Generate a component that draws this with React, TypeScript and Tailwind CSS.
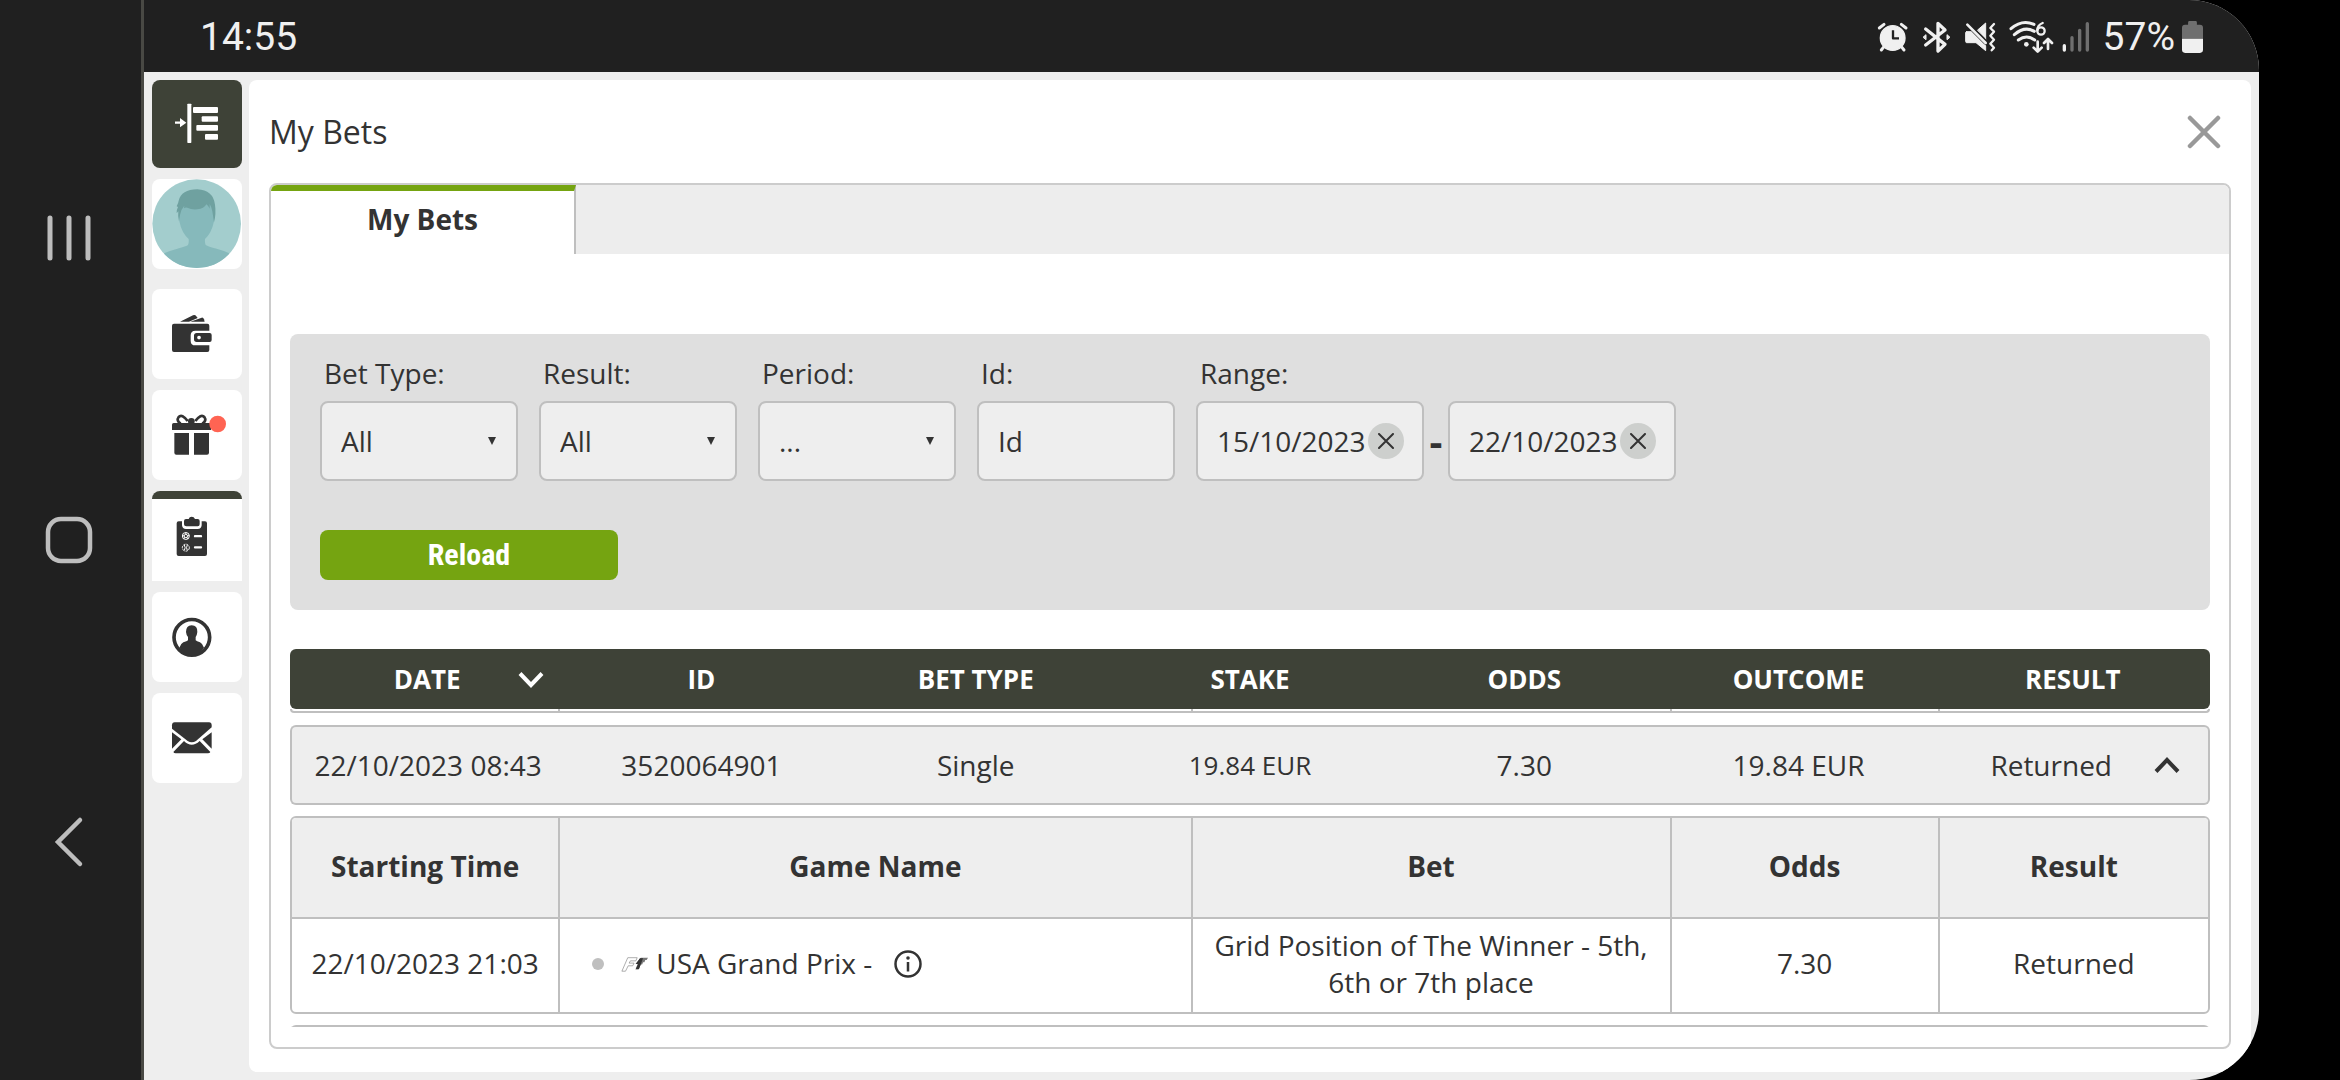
import React, { useState } from "react";

const SANS = "font-['Open_Sans','Noto_Sans',sans-serif]";

/* ---------- status bar ---------- */

function StatusIcons() {
  return (
    <svg viewBox="20 24 645 108" className="h-9 w-[215px]" aria-hidden="true">
      <g fill="#f0f0f0" stroke="#f0f0f0" strokeLinecap="round" strokeLinejoin="round">
        <circle cx="67" cy="81" r="37" strokeWidth="4" />
        <path d="M27 51L41 40M93 40L107 51M41 107L33 117M93 107L101 117" fill="none" strokeWidth="9" />
        <path d="M68 58V82H86" fill="none" stroke="#202020" strokeWidth="7" strokeLinecap="butt" />
        <path d="M166 54L224 100L203 120V37L224 57L166 102" fill="none" strokeWidth="10" />
        <path d="M159 78L167 71V85ZM238 78L230 71V85Z" strokeWidth="3" />
        <path d="M322 57L346 36V84ZM289 62H305L346 104V119L317 95H289Q286 95 286 91V66Q286 62 289 62Z" strokeWidth="3" />
        <path d="M293 41L346 94" fill="none" stroke="#202020" strokeWidth="14" />
        <path d="M291 41L346 96" fill="none" strokeWidth="8" />
        <path d="M371 39L360 51L371 62L360 74L371 86L360 98L371 110L364 118" fill="none" strokeWidth="7" />
        <path d="M422 53Q455 24 491 40M432 71Q463 44 492 61M444 87Q469 69 493 87" fill="none" strokeWidth="9" />
        <circle cx="468" cy="100" r="7" stroke="none" />
        <path d="M517 36Q501 42 501 58" fill="none" strokeWidth="7" />
        <circle cx="512" cy="60" r="11" fill="none" strokeWidth="7" />
        <path d="M502 92V121M490 110L502 122L514 110M533 114V85M521 96L533 84L545 96" fill="none" strokeWidth="8" />
        <path d="M582 104V117" fill="none" strokeWidth="10" />
        <path d="M605 80V117M628 58V117M651 38V117" fill="none" stroke="#6f6f6f" strokeWidth="10" />
      </g>
    </svg>
  );
}

function Battery() {
  return (
    <svg viewBox="0 0 62 94" className="h-8 w-[21px]" aria-hidden="true">
      <path d="M18 11V4Q18 0 22 0H40Q44 0 44 4V11H53Q62 11 62 20V52H0V20Q0 11 9 11Z" fill="#6f6f6f" />
      <path d="M0 52H62V85Q62 94 53 94H9Q0 94 0 85Z" fill="#f0f0f0" />
    </svg>
  );
}

/* ---------- left system navigation ---------- */

function SystemNav() {
  const btn = "flex h-[302px] w-full items-center justify-center pr-[3px]";
  return (
    <nav className="flex w-36 shrink-0 flex-col justify-center border-r-[3px] border-[#494944] bg-[#202020]">
      <button className={btn} aria-label="Recent apps">
        <svg viewBox="0 0 46 48" className="h-12 w-[46px]" stroke="#bdbdbd" strokeWidth="5" strokeLinecap="round">
          <path d="M4 4V44M23 4V44M42 4V44" />
        </svg>
      </button>
      <button className={btn} aria-label="Home">
        <svg viewBox="0 0 48 48" className="size-12">
          <rect x="3" y="3" width="42" height="42" rx="13" fill="none" stroke="#bdbdbd" strokeWidth="4.5" />
        </svg>
      </button>
      <button className={btn} aria-label="Back">
        <svg viewBox="0 0 30 52" className="h-[52px] w-[30px]" fill="none" stroke="#bdbdbd" strokeWidth="4.5" strokeLinecap="round">
          <path d="M26 4L4 26L26 48" />
        </svg>
      </button>
    </nav>
  );
}

/* ---------- app sidebar ---------- */

function CollapseIcon() {
  return (
    <svg viewBox="36 30 270 264" className="size-full" fill="#fff">
      <rect x="142" y="101" width="12" height="118" rx="2" />
      <rect x="159" y="111" width="75" height="18" rx="3" />
      <rect x="185" y="139" width="49" height="16" rx="3" />
      <rect x="169" y="165" width="65" height="17" rx="3" />
      <rect x="195" y="192" width="39" height="17" rx="3" />
      <path d="M105 154.500H120V144L139 158L120 172V161.500H105Z" />
    </svg>
  );
}

function AvatarIcon() {
  return (
    <svg viewBox="36 328 270 270" className="size-full">
      <defs>
        <clipPath id="avatar-clip">
          <circle cx="170" cy="462" r="133" />
        </clipPath>
      </defs>
      <g clipPath="url(#avatar-clip)">
        <rect x="36" y="328" width="270" height="270" fill="#a3cdcd" />
        <path d="M30 600L74 550Q90 543 112 537Q140 530 144 526Q147 522 146 508Q125 490 118 455Q114 410 130 395H208Q226 410 222 455Q215 490 195 508Q194 522 197 526Q204 531 230 537Q252 543 266 550L310 600Z" fill="#86b9bb" />
        <path d="M117 455Q113 440 115 425L110 431Q110 418 114 412L110 410Q115 400 116 393Q124 360 172 359Q219 361 225 405Q229 432 222 458L217 425Q214 410 209 403L209 417Q205 408 199 404Q192 418 172 419Q155 421 142 414Q136 412 132 416L133 408Q122 420 120 436Z" fill="#6fa1a0" />
      </g>
    </svg>
  );
}

function WalletIcon() {
  return (
    <svg viewBox="36 657 270 270" className="size-full" fill="#333">
      <path d="M120 755L159 736Q165 733 169 739L173 744L147 755Z" />
      <path d="M151 755L185 743Q190 742 192 748L194 755Z" />
      <path d="M102 761H202Q208 761 208 767V782H166Q152 782 152 796V812Q152 826 166 826H208V840Q208 846 202 846H102Q96 846 96 840V767Q96 761 102 761Z" />
      <path fillRule="evenodd" d="M170 789H209Q215 789 215 795V810Q215 816 209 816H170Q162 816 162 808V797Q162 789 170 789ZM177 797A5.500 5.500 0 1 0 177.100 797Z" />
    </svg>
  );
}

function GiftIcon() {
  return (
    <svg viewBox="36 960 270 270" className="size-full" fill="#333">
      <path d="M143 1053Q126 1030 116 1041Q108 1052 122 1061M166 1053Q183 1030 193 1041Q201 1052 187 1061" fill="none" stroke="#333" strokeWidth="8" />
      <circle cx="154" cy="1054" r="10" />
      <path d="M101 1059H208Q213 1059 213 1064V1080H96V1064Q96 1059 101 1059Z" />
      <path d="M103 1089H147V1154H109Q103 1154 103 1148ZM162 1089H207V1148Q207 1154 201 1154H162Z" />
      <circle cx="233" cy="1062" r="25" fill="#ff6453" />
    </svg>
  );
}

function BetsIcon() {
  return (
    <svg viewBox="36 33 270 270" className="size-full" fill="#333">
      <path d="M116 124H126V136Q127 147 138 147H173Q184 147 185 136V124H195Q201 124 201 130V222Q201 228 195 228H116Q110 228 110 222V130Q110 124 116 124Z" />
      <path d="M138 117H146Q148 110 155 110Q162 110 165 117H173Q179 117 179 123V133Q179 139 173 139H139Q132 139 132 133V123Q132 117 138 117Z" />
      <g fill="none" stroke="#fff" strokeWidth="3">
        <circle cx="137.500" cy="168" r="10.500" />
        <circle cx="137.500" cy="168" r="5" />
        <path d="M137.500 157V163M127 166L132 168M148 166L143 168M131 177L134 172M144 177L141 172" />
        <circle cx="137.500" cy="203" r="10.500" strokeDasharray="7 3" />
        <path d="M133 195Q138 203 133 211M142 195Q137 203 142 211" />
      </g>
      <path d="M165 168.500H183M165 202H183" stroke="#fff" strokeWidth="7" strokeLinecap="round" />
    </svg>
  );
}

function ProfileIcon() {
  return (
    <svg viewBox="36 337 270 270" className="size-full">
      <circle cx="155.500" cy="473" r="53.500" fill="none" stroke="#333" strokeWidth="11" />
      <path d="M155 437Q173 438 172 457Q171 467 167 472V482Q170 485 180 488Q189 493 192 504Q178 526 155 527Q132 526 118 504Q121 493 130 488Q141 485 144 482V472Q139 467 138 457Q138 438 155 437Z" fill="#333" />
    </svg>
  );
}

function MailIcon() {
  return (
    <svg viewBox="36 641 270 270" className="size-full" fill="#333">
      <path d="M104 729H207Q215 729 215 738V744L168 785Q155 793 143 785L96 748V738Q96 729 104 729Z" />
      <path d="M96 759L124 780L96 808ZM215 759L187 780L215 808ZM132 785Q155 808 179 785L211 818Q209 822 204 822H107Q102 822 100 818Z" />
    </svg>
  );
}

function SideButton({ label, children }: { label: string; children: React.ReactNode }) {
  return (
    <button aria-label={label} className="h-[90px] w-full overflow-hidden rounded-lg bg-white">
      {children}
    </button>
  );
}

function Sidebar() {
  return (
    <aside className="flex w-[90px] shrink-0 flex-col gap-[11px]">
      <button aria-label="Collapse menu" className="h-[88px] w-full rounded-lg bg-[#3e4237]">
        <CollapseIcon />
      </button>
      <div className="mb-[9px] flex">
        <SideButton label="Avatar"><AvatarIcon /></SideButton>
      </div>
      <SideButton label="Wallet"><WalletIcon /></SideButton>
      <SideButton label="Bonuses"><GiftIcon /></SideButton>
      <button aria-label="My bets" className="h-[90px] w-full overflow-hidden rounded-t-lg bg-linear-to-b from-[#3e4237] from-[8px] to-white to-[8px]">
        <BetsIcon />
      </button>
      <SideButton label="Profile"><ProfileIcon /></SideButton>
      <SideButton label="Messages"><MailIcon /></SideButton>
    </aside>
  );
}

/* ---------- filters ---------- */

const FIELD = "h-20 rounded-lg border-2 border-[#bfbfbf] bg-[#eeeeee] text-[28px] text-[#333]";

function Field({ id, label, children }: { id: string; label: string; children: React.ReactNode }) {
  return (
    <div className="flex flex-col gap-[10px]">
      <label htmlFor={id} className="pl-1 leading-9">{label}</label>
      {children}
    </div>
  );
}

function SelectBox({ id, value }: { id: string; value: string }) {
  return (
    <div className="relative w-[198px]">
      <select id={id} className={`${FIELD} w-full appearance-none pl-[19px] outline-none`}>
        <option>{value}</option>
      </select>
      <svg viewBox="0 0 8 8" className="pointer-events-none absolute top-9 right-[22px] size-2" fill="#333">
        <path d="M0 0H8L4 8Z" />
      </svg>
    </div>
  );
}

function DateBox({ id, initial, label }: { id: string; initial: string; label?: string }) {
  const [value, setValue] = useState(initial);
  return (
    <div className={`${FIELD} flex w-[228px] items-center pr-[18px] pl-[19px]`}>
      <input
        id={id}
        aria-label={label}
        value={value}
        onChange={(e) => setValue(e.target.value)}
        className="w-0 min-w-0 flex-1 bg-transparent outline-none"
      />
      <button
        aria-label="Clear date"
        onClick={() => setValue("")}
        className="flex size-9 shrink-0 items-center justify-center rounded-full bg-[#cdcfcd]"
      >
        <svg viewBox="0 0 16 16" className="size-4" stroke="#333" strokeWidth="2" strokeLinecap="round">
          <path d="M1 1L15 15M15 1L1 15" />
        </svg>
      </button>
    </div>
  );
}

function Filters() {
  return (
    <form
      onSubmit={(e) => e.preventDefault()}
      className="flex flex-col items-start gap-[49px] rounded-lg bg-[#dfdfdf] px-[30px] pt-[21px] pb-[30px] text-[28px]"
    >
      <div className="flex gap-[21px]">
        <Field id="bet-type" label="Bet Type:"><SelectBox id="bet-type" value="All" /></Field>
        <Field id="result" label="Result:"><SelectBox id="result" value="All" /></Field>
        <Field id="period" label="Period:"><SelectBox id="period" value="..." /></Field>
        <Field id="bet-id" label="Id:">
          <input id="bet-id" placeholder="Id" className={`${FIELD} w-[198px] pl-[19px] outline-none placeholder:text-[#333]`} />
        </Field>
        <Field id="from" label="Range:">
          <div className="flex items-center">
            <DateBox id="from" initial="15/10/2023" />
            <span className="w-6 text-center text-[40px] leading-10 font-bold">-</span>
            <DateBox id="to" initial="22/10/2023" label="Range end" />
          </div>
        </Field>
      </div>
      <button className="h-[50px] w-[298px] rounded-lg bg-[#75a411] font-['Roboto_Condensed','Roboto',sans-serif] text-[30px] leading-[50px] font-bold text-white">
        Reload
      </button>
    </form>
  );
}

/* ---------- bets table ---------- */

function Chevron({ up, className }: { up?: boolean; className: string }) {
  return (
    <svg viewBox="0 0 26 18" className={`${className} h-[18px] w-[26px]`} fill="none" stroke="currentColor" strokeWidth="4">
      <path d={up ? "M2 15.500L13 4L24 15.500" : "M2 2.500L13 14L24 2.500"} />
    </svg>
  );
}

function RaceLogo() {
  return (
    <svg viewBox="0 0 60 40" className="h-[18px] w-[27px] shrink-0" aria-hidden="true">
      <path d="M2 36L15 6H36L33 13H21L18 18H29L26 24H16L10 36Z" fill="none" stroke="#888" strokeWidth="1.500" />
      <path d="M44 6H60L57 11H54L52 16H49L47 21H44L39 32H32L37 20H32Z" fill="#777" />
      <path d="M42 7H49L40 31H33L38 20H33Z" fill="#333" />
    </svg>
  );
}

function InfoIcon() {
  return (
    <svg viewBox="0 0 28 28" className="size-7" fill="none" stroke="#333" strokeWidth="2.500">
      <circle cx="14" cy="14" r="12.500" />
      <path d="M14 12V21.500" />
      <circle cx="14" cy="8" r="1.800" fill="#333" stroke="none" />
    </svg>
  );
}

const HEADS = ["DATE", "ID", "BET TYPE", "STAKE", "ODDS", "OUTCOME", "RESULT"];
const LINE = "border-[#bfbfbf]";

function DetailCols() {
  return (
    <colgroup>
      <col className="w-[14%]" />
      <col className="w-[33%]" />
      <col className="w-[25%]" />
      <col className="w-[14%]" />
      <col className="w-[14%]" />
    </colgroup>
  );
}

function Details() {
  const th = `h-[101px] border-r-2 border-b-2 ${LINE} last:border-r-0 pb-[2px] font-bold`;
  const td = `h-[93px] border-r-2 ${LINE} last:border-r-0 pb-1`;
  return (
    <div className={`overflow-hidden rounded-md border-2 ${LINE} bg-white`}>
      <table className="w-full table-fixed border-separate border-spacing-0 text-center leading-[37px]">
        <DetailCols />
        <thead className="bg-[#eeeeee]">
          <tr>
            <th className={th}>Starting Time</th>
            <th className={th}>Game Name</th>
            <th className={th}>Bet</th>
            <th className={th}>Odds</th>
            <th className={th}>Result</th>
          </tr>
        </thead>
        <tbody>
          <tr>
            <td className={td}>22/10/2023 21:03</td>
            <td className={td}>
              <div className="flex items-center pl-8">
                <span className="size-3 rounded-full bg-[#bfbfbf]" />
                <span className="ml-[17px] flex items-center gap-2">
                  <RaceLogo />
                  USA Grand Prix -
                </span>
                <button aria-label="Game info" className="ml-[22px]"><InfoIcon /></button>
              </div>
            </td>
            <td className={`${td} px-4`}>Grid Position of The Winner - 5th, 6th or 7th place</td>
            <td className={td}>7.30</td>
            <td className={td}>Returned</td>
          </tr>
        </tbody>
      </table>
    </div>
  );
}

function BetsTable() {
  const cell = `h-20 border-y-2 ${LINE} bg-[#eeeeee] first:rounded-l-md first:border-l-2 last:rounded-r-md last:border-r-2`;
  return (
    <table className="w-full table-fixed border-separate border-spacing-0 text-center text-[28px]">
      <thead>
        <tr>
          {HEADS.map((h, i) => (
            <th
              key={h}
              aria-sort={i === 0 ? "descending" : undefined}
              className="relative h-[60px] bg-[#3e4237] text-[26px] font-bold text-white first:rounded-l-md last:rounded-r-md"
            >
              {h}
              {i === 0 && <Chevron className="absolute top-[22px] right-[20px]" />}
            </th>
          ))}
        </tr>
      </thead>
      <tbody>
        <tr>
          <td colSpan={7} className="h-4 align-top">
            <div className={`grid h-1 grid-cols-[14fr_33fr_25fr_14fr_14fr] rounded-b-md border-x-2 border-b-2 ${LINE}`}>
              <span className={`border-r-2 ${LINE}`} />
              <span className={`border-r-2 ${LINE}`} />
              <span className={`border-r-2 ${LINE}`} />
              <span className={`border-r-2 ${LINE}`} />
            </div>
          </td>
        </tr>
        <tr>
          <td className={cell}>22/10/2023 08:43</td>
          <td className={cell}>3520064901</td>
          <td className={cell}>Single</td>
          <td className={`${cell} text-[26px]`}>19.84 EUR</td>
          <td className={cell}>7.30</td>
          <td className={cell}>19.84 EUR</td>
          <td className={cell}>
            <button className="flex w-full items-center justify-end gap-[42px] pr-7">
              Returned
              <Chevron up className="text-[#333]" />
            </button>
          </td>
        </tr>
        <tr>
          <td colSpan={7} className="py-[11px]">
            <Details />
          </td>
        </tr>
        <tr>
          {HEADS.map((h) => (
            <td key={h} className={cell} />
          ))}
        </tr>
      </tbody>
    </table>
  );
}

/* ---------- page ---------- */

export default function App() {
  return (
    <div className={`flex h-screen overflow-hidden bg-black pr-[81px] text-[#333] ${SANS}`}>
      <SystemNav />
      <div className="flex min-w-0 flex-1 flex-col overflow-hidden rounded-r-[70px] bg-[#eeeeee]">
        <header className="flex h-[72px] shrink-0 items-center justify-between bg-[#202020] px-14 pt-[2px] font-['Roboto',sans-serif] text-[39px] text-[#f0f0f0]">
          <time>14:55</time>
          <div className="flex items-center gap-[7px]">
            <StatusIcons />
            <span className="ml-1">57%</span>
            <Battery />
          </div>
        </header>

        <div className="flex min-h-0 flex-1 gap-[7px] p-2">
          <Sidebar />
          <main className="flex min-w-0 flex-1 flex-col rounded-lg bg-white pr-5 pb-[23px] pl-5">
            <div className="flex h-[103px] shrink-0 items-center justify-between pr-[10px]">
              <h1 className="text-[32px]">My Bets</h1>
              <button aria-label="Close">
                <svg viewBox="0 0 34 34" className="size-[34px]" stroke="#999" strokeWidth="4.500" strokeLinecap="round">
                  <path d="M3 3L31 31M31 3L3 31" />
                </svg>
              </button>
            </div>

            <section className="flex min-h-0 flex-1 flex-col overflow-hidden rounded-lg border-2 border-[#cccccc]">
              <div role="tablist" className="flex h-[69px] shrink-0 bg-[#ededed]">
                <button role="tab" aria-selected="true" className="w-[305px] border-t-6 border-r-2 border-t-[#75a411] border-r-[#bfbfbf] bg-white pb-2 text-[28px] font-bold">
                  My Bets
                </button>
              </div>
              <div className="flex min-h-0 flex-1 flex-col px-[19px] pt-20 pb-5">
                <Filters />
                <div className="mt-[39px] min-h-0 flex-1 overflow-hidden">
                  <BetsTable />
                </div>
              </div>
            </section>
          </main>
        </div>
      </div>
    </div>
  );
}
